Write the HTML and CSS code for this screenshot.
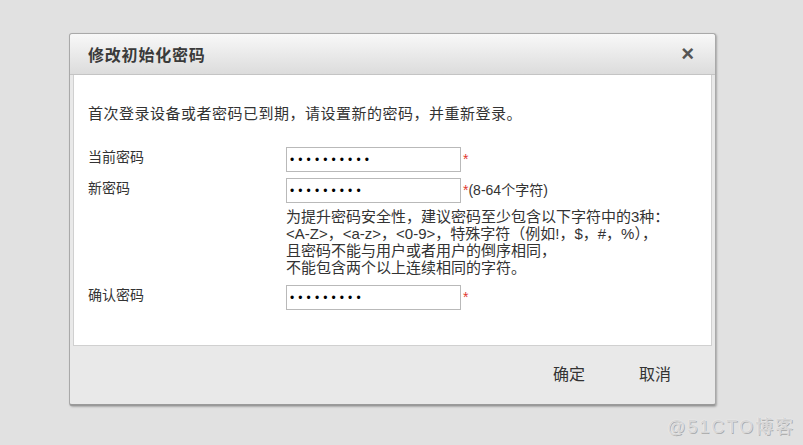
FILE: index.html
```html
<!DOCTYPE html>
<html lang="zh-CN">

<head>
    <meta charset="UTF-8">
    <meta name="viewport" content="width=device-width, initial-scale=1.0">
    <title>修改初始化密码</title>
    <link rel="stylesheet" href="styles.css">
</head>

<body>
    <div class="dialog">
        <div class="dialog-header">
            <span class="dialog-title">修改初始化密码</span>
            <span class="dialog-close">&times;</span>
        </div>

        <div class="dialog-body">
            <p class="intro">首次登录设备或者密码已到期，请设置新的密码，并重新登录。</p>

            <div class="form">
                <label class="label" for="oldPwd">当前密码</label>
                <div class="field">
                    <input type="password" id="oldPwd" value="1234567890"><span class="required">*</span>
                </div>

                <label class="label" for="newPwd">新密码</label>
                <div class="field">
                    <input type="password" id="newPwd" value="123456789"><span class="required">*</span><span class="tip">(8-64个字符)</span>
                    <div class="hint">
                        为提升密码安全性，建议密码至少包含以下字符中的3种：<br>
                        &lt;A-Z&gt;，&lt;a-z&gt;，&lt;0-9&gt;，特殊字符（例如!，$，#，%），<br>
                        且密码不能与用户或者用户的倒序相同，<br>
                        不能包含两个以上连续相同的字符。
                    </div>
                </div>

                <label class="label" for="confirmPwd">确认密码</label>
                <div class="field">
                    <input type="password" id="confirmPwd" value="123456789"><span class="required">*</span>
                </div>
            </div>
        </div>

        <div class="dialog-footer">
            <button class="btn">确定</button>
            <button class="btn">取消</button>
        </div>
    </div>

    <div class="watermark">@51CTO博客</div>
</body>

</html>
```

FILE: styles.css
```css
body {
    font-family: "Liberation Sans", "Noto Sans CJK SC", sans-serif;
    margin: 0;
    padding: 33px 0 0 69px;
    height: 445px;
    box-sizing: border-box;
    background-color: #e1e1e1;
    color: #333;
    position: relative;
    overflow: hidden;
}

.dialog {
    width: 639px;
    background-color: #e9e9e9;
    border: 1px solid #a9a9a9;
    border-radius: 3px;
    box-shadow: 1px 1px 2px rgba(0, 0, 0, 0.25);
    padding: 0 3px 4px;
    border-bottom: 2px solid #9a9a9a;
}

.dialog-header {
    height: 40px;
    margin: 0 -3px;
    padding: 0 21px 0 18px;
    display: flex;
    align-items: center;
    justify-content: space-between;
    background: linear-gradient(#f8f8f8, #dcdcdc);
    border-bottom: 1px solid #c4c4c4;
    border-radius: 3px 3px 0 0;
}

.dialog-title {
    font-size: 16px;
    font-weight: bold;
    color: #3a3a3a;
    letter-spacing: 0.8px;
}

.dialog-close {
    font-size: 22px;
    font-weight: bold;
    color: #555;
    line-height: 1;
}

.dialog-body {
    background-color: #fff;
    border: 1px solid #d0d0d0;
    border-top: none;
    height: 270px;
    padding: 0 14px;
}

.intro {
    margin: 0;
    padding: 30px 0 24px;
    font-size: 15px;
    line-height: 18px;
    letter-spacing: 0.5px;
}

.form {
    display: grid;
    grid-template-columns: 198px auto;
    row-gap: 6px;
}

.label {
    font-size: 14px;
    line-height: 20px;
}

.field {
    font-size: 14px;
}

.field input {
    width: 175px;
    height: 25px;
    box-sizing: border-box;
    border: 1px solid #b9b9b9;
    padding: 0 3px;
    font-family: "Liberation Sans", sans-serif;
    font-size: 12px;
    letter-spacing: 4.1px;
    color: #000;
    vertical-align: top;
    outline: none;
}

.required {
    color: #e0372f;
    margin-left: 2px;
    line-height: 25px;
    vertical-align: top;
}

.tip {
    line-height: 25px;
    vertical-align: top;
}

.hint {
    font-size: 15px;
    line-height: 17px;
    padding: 5px 0 3px;
}

.dialog-footer {
    height: 54px;
    display: flex;
    justify-content: flex-end;
    align-items: center;
    gap: 54px;
    padding-right: 41px;
}

.btn {
    background: none;
    border: none;
    padding: 0;
    font-family: "Liberation Sans", "Noto Sans CJK SC", sans-serif;
    font-size: 16px;
    color: #333;
    cursor: pointer;
}

.watermark {
    position: absolute;
    right: 8px;
    bottom: 7px;
    font-size: 18px;
    letter-spacing: 2px;
    color: #d6d6d6;
    text-shadow: 0 0 1px #fff, 1px 1px 0 #a8a8a8;
}
```
